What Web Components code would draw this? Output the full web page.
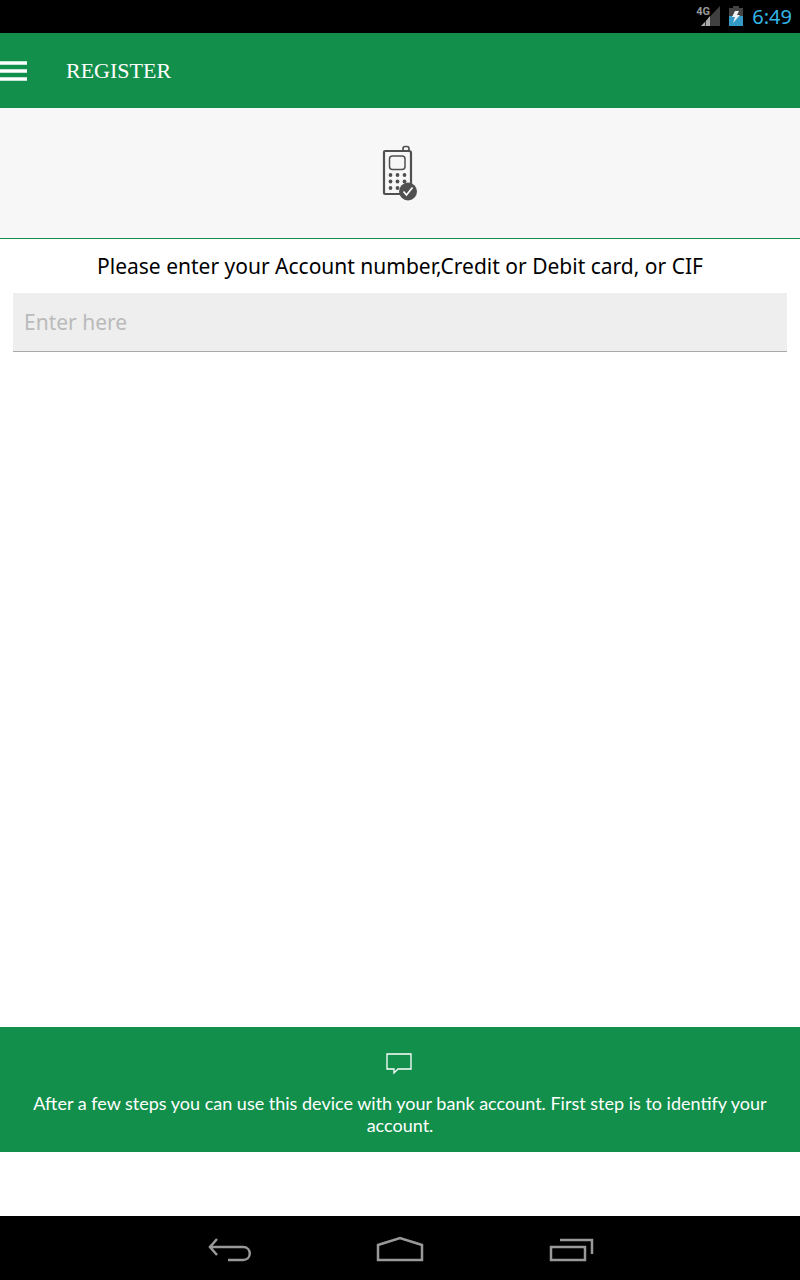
<!DOCTYPE html>
<html lang="en">
<head>
<meta charset="utf-8">
<meta name="viewport" content="width=device-width, initial-scale=1">
<title>Register</title>
<style>
html, body { height: 100%; margin: 0; }
body { background: #fff; font-family: "Noto Sans", sans-serif; }
</style>
</head>
<body>
<register-screen></register-screen>
<script>
const define = (name, markup) => {
  const template = document.createElement('template');
  template.innerHTML = markup;
  customElements.define(name, class extends HTMLElement {
    constructor() {
      super();
      this.attachShadow({ mode: 'open' }).append(template.content.cloneNode(true));
    }
  });
};

define('status-bar', `
<style>
  :host { display: flex; align-items: center; justify-content: flex-end; gap: 9px; height: 33px; padding-right: 8px; background: #000; color: #33b5e5; font-size: 20px; line-height: 34px; }
  svg { display: block; }
  .signal { position: relative; width: 24px; height: 22px; }
  .signal span { position: absolute; left: 0; top: 0; color: #999; font: bold 11px/12px Roboto, sans-serif; }
</style>
<div class="signal" role="img" aria-label="Signal">
  <svg width="24" height="22" viewBox="0 0 24 22"><path d="M5 20 24 0V20Z" fill="#404040"/><path d="M5 20 9 16V20ZM10 15 14 10V20H10Z" fill="#aaa"/></svg>
  <span>4G</span>
</div>
<svg width="14" height="22" viewBox="0 0 14 22" role="img" aria-label="Charging"><path d="M0 2H4V0H10V2H14V20H0Z" fill="#444"/><path d="M0 10H14V20H0Z" fill="#3399c5"/><path d="M6 5H10L8 9H11L4 17 6 11H3Z" fill="#f2f2f2"/></svg>
<time><slot></slot></time>`);

define('app-header', `
<style>
  :host { display: flex; align-items: center; gap: 39px; height: 75px; background: #128f4b; color: #fff; }
  button { display: block; padding: 0; border: 0; background: none; }
  svg { display: block; }
  h1 { margin: 0; font: 22px/32px "Liberation Serif", serif; }
</style>
<button type="button" aria-label="Menu"><svg width="27" height="20" viewBox="0 0 27 20"><path d="M0 2H27M0 10H27M0 18H27" stroke="#fff" stroke-width="3.4"/></svg></button>
<h1><slot></slot></h1>`);

define('device-banner', `
<style>
  :host { display: flex; justify-content: center; align-items: center; box-sizing: border-box; height: 131px; border-bottom: 1px solid #128f4b; background: #f7f7f7; }
</style>
<svg width="36" height="56" viewBox="0 0 36 56" fill="none" stroke="#505050" aria-hidden="true">
  <path d="M3 6H27Q29 6 29 8V47Q29 49 27 49H3Q2 49 2 48V7Q2 6 3 6Z" stroke-width="2.2"/>
  <path d="M21 6V4Q21 1.500 23 1.500H25Q27 1.500 27 4V6" stroke-width="1.700"/>
  <rect x="7.500" y="11" width="15.500" height="13.500" rx="3" stroke-width="1.500"/>
  <g fill="#505050" stroke="none">
    <circle cx="8.500" cy="30" r="1.900"/><circle cx="15.500" cy="30" r="1.900"/><circle cx="22.500" cy="30" r="1.900"/>
    <circle cx="8.500" cy="36.500" r="1.900"/><circle cx="15.500" cy="36.500" r="1.900"/><circle cx="22.500" cy="36.500" r="1.900"/>
    <circle cx="8.500" cy="43" r="1.900"/><circle cx="15.500" cy="43" r="1.900"/>
  </g>
  <circle cx="26" cy="46.500" r="9" fill="#505050" stroke="none"/>
  <path d="M21.500 46.500 24.500 50 30.500 42.500" stroke="#fff" stroke-width="1.700"/>
</svg>`);

define('account-field', `
<style>
  :host { display: block; padding: 11px 13px; }
  label { display: block; margin-bottom: 11px; color: #000; font-size: 21px; line-height: 32px; text-align: center; }
  input { display: block; box-sizing: border-box; width: 100%; height: 59px; padding: 0 11px; border: 0; border-bottom: 1px solid #aaa; border-radius: 0; outline: 0; background: #eee; color: #000; font: inherit; font-size: 21px; }
  input::placeholder { color: #bababa; opacity: 1; }
</style>
<label for="account"><slot></slot></label>
<input id="account" type="text" placeholder="Enter here">`);

define('help-panel', `
<style>
  :host { display: flex; flex-direction: column; align-items: center; gap: 17px; padding: 26px 32px 16px; background: #128f4b; color: #fff; }
  svg { display: block; }
  p { margin: 0; font: 18px/22px Lato, sans-serif; text-align: center; }
</style>
<svg width="28" height="22" viewBox="0 0 28 22" fill="none" stroke="#fff" stroke-width="1.300" aria-hidden="true"><path d="M1 1H25V16H12L8 20V16H1Z"/></svg>
<p><slot></slot></p>`);

define('system-nav', `
<style>
  :host { display: flex; justify-content: center; align-items: center; gap: 124px; height: 64px; background: #000; }
  button { display: block; padding: 0; border: 0; background: none; }
  svg { display: block; fill: none; stroke: #999; stroke-width: 2.500; }
</style>
<button type="button" aria-label="Back"><svg width="46" height="28" viewBox="0 0 46 28"><path d="M3 13H37C46 13 46 26 37 26H22M11 5 4 13 11 21"/></svg></button>
<button type="button" aria-label="Home"><svg width="48" height="28" viewBox="0 0 48 28"><path d="M2 26V11L24 4 46 11V26Z"/></svg></button>
<button type="button" aria-label="Recent apps"><svg width="46" height="28" viewBox="0 0 46 28"><path d="M3 13H37V26H3ZM12 6H44V20"/></svg></button>`);

define('register-screen', `
<style>
  :host { display: flex; flex-direction: column; min-height: 100%; }
  main { flex: 1; }
  help-panel { margin-bottom: 64px; }
</style>
<status-bar>6:49</status-bar>
<app-header>REGISTER</app-header>
<main>
  <device-banner></device-banner>
  <account-field>Please enter your Account number,Credit or Debit card, or CIF</account-field>
</main>
<help-panel>After a few steps you can use this device with your bank account. First step is to identify your account.</help-panel>
<system-nav></system-nav>`);
</script>
</body>
</html>
